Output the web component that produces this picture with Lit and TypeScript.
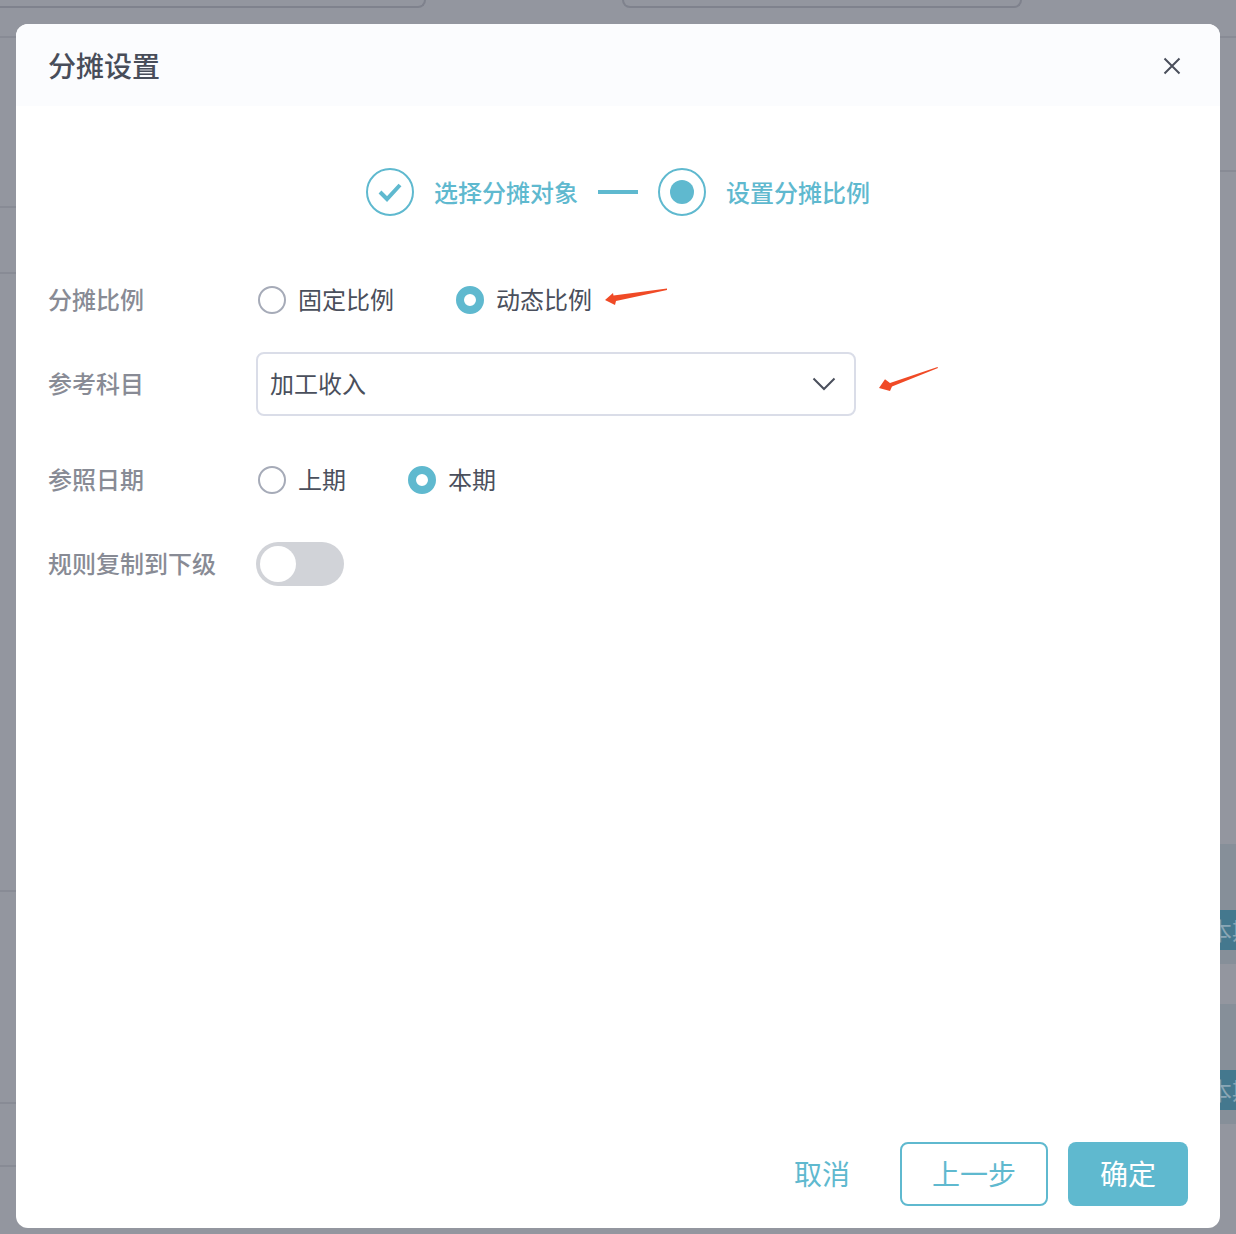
import { LitElement, html, css } from "lit";
import { customElement } from "lit/decorators.js";

@customElement("app-root")
export class AppRoot extends LitElement {
  static styles = css`
    :host {
      display: block;
      position: relative;
      width: 1236px;
      height: 1234px;
      overflow: hidden;
      background: #93969f;
      font-family: "Noto Sans CJK SC", "Noto Sans", sans-serif;
      color: #4a4f5c;
    }
    .bg { position: absolute; }
    .box { border: 2px solid #7f828d; border-top: 0; border-radius: 0 0 8px 8px; height: 8px; top: -2px; }
    .b1 { left: -10px; width: 432px; }
    .b2 { left: 622px; width: 396px; }
    .line { height: 2px; background: #888b95; }
    .l { left: 0; width: 16px; }
    .r { left: 1220px; width: 16px; }
    .band { left: 1220px; width: 16px; background: #868f99; }
    .tag {
      width: 30px; height: 40px; background: #44788e; color: #8aa6b5;
      font-size: 24px; line-height: 40px; white-space: nowrap; text-indent: -12px;
    }
    .tagwrap { left: 1220px; width: 16px; height: 40px; overflow: hidden; }
    .dialog {
      position: absolute; left: 16px; top: 24px; width: 1204px; height: 1204px;
      background: #fff; border-radius: 12px; overflow: hidden;
      display: flex; flex-direction: column;
    }
    .header {
      height: 82px; flex: none; background: #fbfcfe; display: flex; align-items: center;
      justify-content: space-between; padding: 0 37px 0 32px; box-sizing: border-box;
    }
    .title { font-size: 28px; font-weight: 500; color: #484d59; line-height: 40px; }
    .close { width: 22px; height: 22px; display: block; margin-top: 2px; }
    .steps {
      display: flex; align-items: center; margin: 62px 0 0 350px; height: 48px;
      color: #5fb9cf; font-size: 24px; font-weight: 500;
    }
    .circle {
      width: 48px; height: 48px; border: 2px solid #5fb9cf; border-radius: 50%; box-sizing: border-box;
      display: flex; align-items: center; justify-content: center; flex: none;
    }
    .dot { width: 24px; height: 24px; border-radius: 50%; background: #5fb9cf; }
    .steptext { margin-left: 20px; line-height: 34px; white-space: nowrap; padding-bottom: 1px; }
    .conn { width: 40px; height: 4px; background: #5fb9cf; margin: 0 20px; flex: none; }
    .form { margin: 52px 0 0 32px; display: flex; flex-direction: column; position: relative; }
    .row { display: flex; align-items: center; height: 64px; }
    .mb20 { margin-bottom: 20px; }
    .mb32 { margin-bottom: 32px; }
    .label {
      width: 208px; flex: none; font-size: 24px; font-weight: 500; color: #888b95; white-space: nowrap;
      padding-bottom: 4px;
    }
    .radios { display: flex; align-items: center; padding-left: 2px; }
    .radio { display: flex; align-items: center; font-size: 24px; color: #4a4f5c; white-space: nowrap; }
    .radio + .radio { margin-left: 62px; }
    .radio-text { padding-bottom: 4px; }
    .rad {
      width: 28px; height: 28px; border-radius: 50%; border: 2px solid #a6abb8; box-sizing: border-box;
      margin-right: 12px; flex: none; background: #fff;
    }
    .rad.on { border: 8px solid #5fb9cf; }
    .select {
      width: 600px; height: 64px; box-sizing: border-box; border: 2px solid #dadde8; border-radius: 8px;
      display: flex; align-items: center; justify-content: space-between; padding: 0 18px 0 12px;
      font-size: 24px; color: #4a4f5c;
    }
    .select-text { padding-bottom: 4px; }
    .chev { width: 24px; height: 14px; display: block; }
    .switch {
      width: 88px; height: 44px; border-radius: 22px; background: #d1d3d8; padding: 4px; box-sizing: border-box;
    }
    .knob { width: 36px; height: 36px; border-radius: 50%; background: #fff; }
    .arrow { position: absolute; display: block; }
    .a1 { left: 557px; top: 20px; width: 66px; height: 18px; }
    .a2 { left: 831px; top: 98px; width: 62px; height: 26px; }
    .spacer { flex: 1; }
    .footer { display: flex; justify-content: flex-end; align-items: center; padding: 0 32px 22px 0; gap: 20px; }
    .btn {
      height: 64px; box-sizing: border-box; border-radius: 8px; font-size: 28px; display: flex;
      align-items: center; justify-content: center; color: #5fb9cf; white-space: nowrap; padding-bottom: 3px;
    }
    .cancel { width: 118px; margin-right: -1px; }
    .outline { width: 148px; border: 2px solid #5fb9cf; background: #fff; }
    .primary { width: 120px; background: #5fb9cf; color: #fff; }
  `;

  render() {
    return html`
      <div class="bg box b1"></div>
      <div class="bg box b2"></div>
      ${[36, 206, 272, 890, 1102, 1165].map(
        (y) => html`<div class="bg line l" style="top:${y}px"></div>`
      )}
      ${[36, 170].map((y) => html`<div class="bg line r" style="top:${y}px"></div>`)}
      <div class="bg band" style="top:844px;height:120px"></div>
      <div class="bg band" style="top:1004px;height:120px"></div>
      <div class="bg tagwrap" style="top:910px"><div class="tag">本期</div></div>
      <div class="bg tagwrap" style="top:1070px"><div class="tag">本期</div></div>

      <div class="dialog">
        <div class="header">
          <div class="title">分摊设置</div>
          <svg class="close" viewBox="0 0 22 22" fill="none" stroke="#4a4f5c" stroke-width="2">
            <path d="M3.5 3.5L18.5 18.5M18.5 3.5L3.5 18.5" />
          </svg>
        </div>

        <div class="steps">
          <div class="circle">
            <svg width="24" height="20" viewBox="0 0 24 20" fill="none" stroke="#5fb9cf" stroke-width="4">
              <path d="M2 10L9 17L22 3" />
            </svg>
          </div>
          <div class="steptext">选择分摊对象</div>
          <div class="conn"></div>
          <div class="circle"><div class="dot"></div></div>
          <div class="steptext">设置分摊比例</div>
        </div>

        <div class="form">
          <div class="row mb20">
            <div class="label">分摊比例</div>
            <div class="radios">
              <div class="radio"><span class="rad"></span><span class="radio-text">固定比例</span></div>
              <div class="radio"><span class="rad on"></span><span class="radio-text">动态比例</span></div>
            </div>
          </div>
          <div class="row mb32">
            <div class="label">参考科目</div>
            <div class="select">
              <span class="select-text">加工收入</span>
              <svg class="chev" viewBox="0 0 24 14" fill="none" stroke="#4a4f5c" stroke-width="2">
                <path d="M1.5 1.5L12 12L22.5 1.5" />
              </svg>
            </div>
          </div>
          <div class="row mb20">
            <div class="label">参照日期</div>
            <div class="radios">
              <div class="radio"><span class="rad"></span><span class="radio-text">上期</span></div>
              <div class="radio"><span class="rad on"></span><span class="radio-text">本期</span></div>
            </div>
          </div>
          <div class="row">
            <div class="label">规则复制到下级</div>
            <div class="switch"><div class="knob"></div></div>
          </div>

          <svg class="arrow a1" viewBox="0 0 66 18">
            <path d="M0 12L8 5L8.5 7.5L62 0.5L62 2L11 13L10 17Z" fill="#f04a26" />
          </svg>
          <svg class="arrow a2" viewBox="0 0 62 26">
            <path d="M0 22L6 13.3L11 17L58.5 1L59 2L13 20.5L11 25Z" fill="#f04a26" />
          </svg>
        </div>

        <div class="spacer"></div>

        <div class="footer">
          <div class="btn cancel">取消</div>
          <div class="btn outline">上一步</div>
          <div class="btn primary">确定</div>
        </div>
      </div>
    `;
  }
}
